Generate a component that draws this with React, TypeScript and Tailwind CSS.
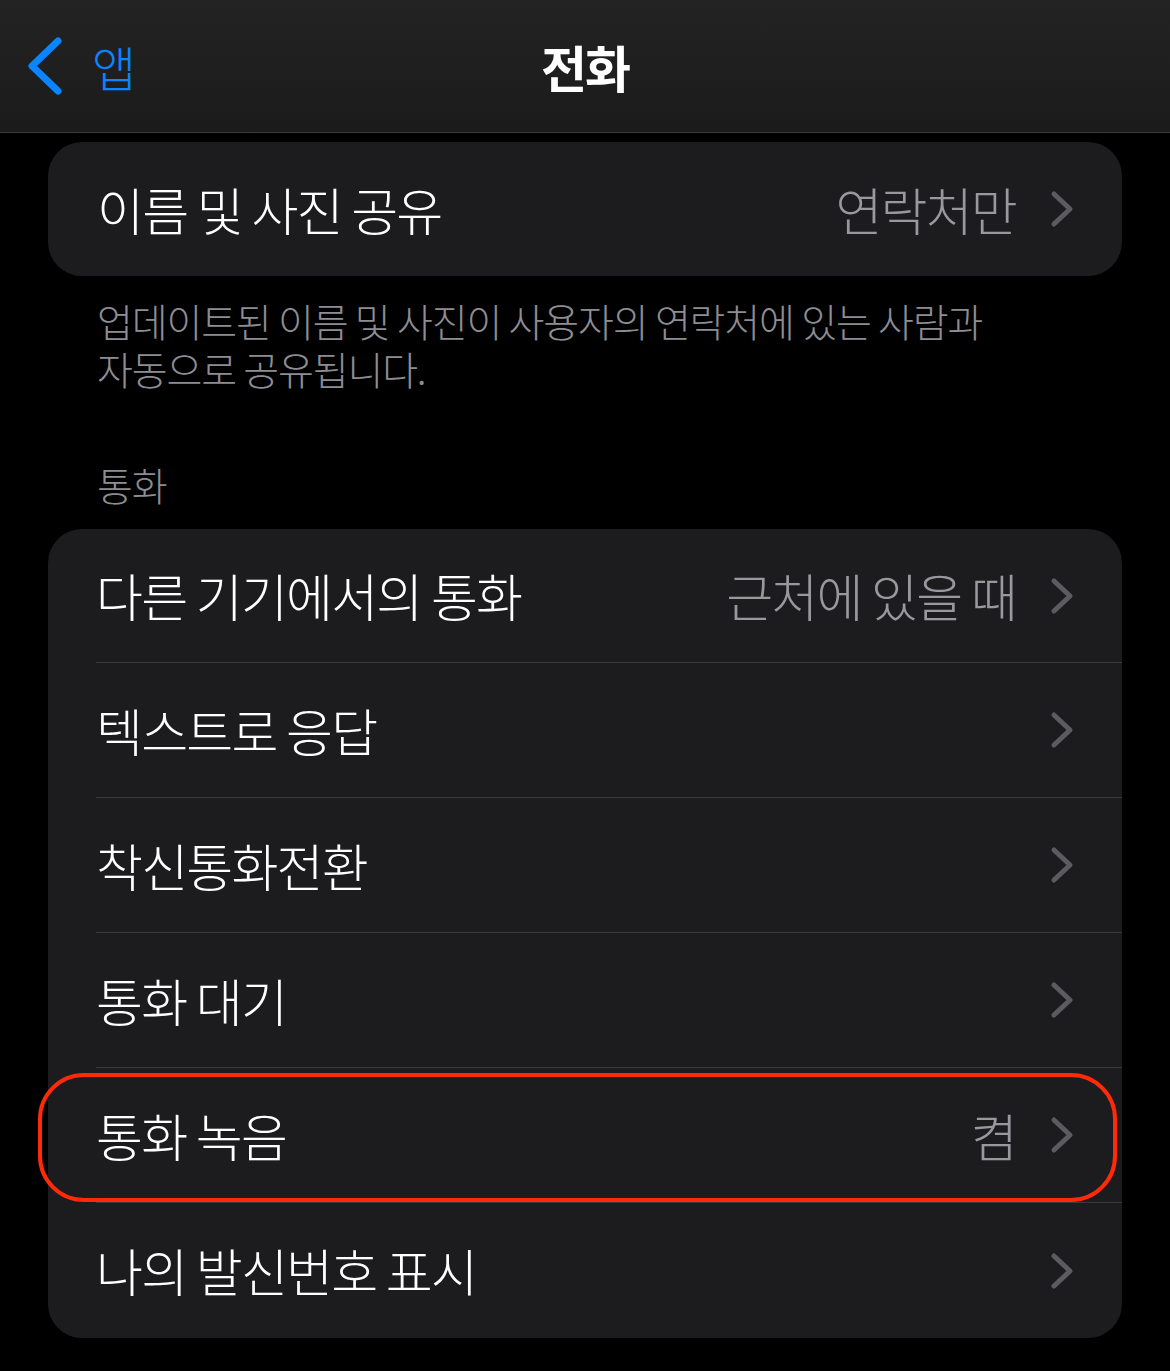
import React from "react";

const font = { fontFamily: '"Noto Sans CJK KR", "Noto Sans", sans-serif' };

function Chevron() {
  return (
    <svg width="24" height="38" viewBox="0 0 24 38" className="shrink-0">
      <polyline points="4,4 20,19 4,34" fill="none" stroke="#5b5b60" strokeWidth="5" strokeLinecap="round" strokeLinejoin="round" />
    </svg>
  );
}

function Row({ label, value, last, first }: { label: string; value?: string; last?: boolean; first?: boolean }) {
  return (
    <div className={`ml-[48px] flex items-center pr-[48px] ${first ? "h-[134px]" : "h-[135px]"} ${last ? "" : "border-b-[1.5px] border-[#3a3a3c]"}`}>
      <div className="flex-1 text-[51px] font-light leading-none tracking-[-0.035em] text-white">{label}</div>
      {value && <div className="mr-[34px] text-[51px] font-light leading-none tracking-[-0.035em] text-[#98989e]">{value}</div>}
      <Chevron />
    </div>
  );
}

export default function App() {
  return (
    <div className="min-h-[1371px] w-[1170px] bg-black" style={font}>
      <header className="grid h-[133px] grid-cols-[1fr_auto_1fr] items-center border-b-[1.5px] border-[#3a3a3a] bg-gradient-to-b from-[#232323] to-[#1b1b1b]">
        <div className="flex items-center gap-[28px] pl-[26px]">
          <svg width="38" height="60" viewBox="0 0 38 60">
            <polyline points="32,5 6,30 32,55" fill="none" stroke="#0a84ff" strokeWidth="7" strokeLinecap="round" strokeLinejoin="round" />
          </svg>
          <span className="text-[48px] font-light leading-none text-[#0a84ff]">앱</span>
        </div>
        <div className="text-[50px] font-bold leading-none tracking-[-0.04em] text-white">전화</div>
        <div />
      </header>

      <div className="mx-[48px] mt-[9px] rounded-[34px] bg-[#1c1c1e]">
        <div className="flex h-[134px] items-center pl-[49px] pr-[48px]">
          <div className="flex-1 text-[51px] font-light leading-none tracking-[-0.035em] text-white">이름 및 사진 공유</div>
          <div className="mr-[34px] text-[51px] font-light leading-none tracking-[-0.035em] text-[#98989e]">연락처만</div>
          <Chevron />
        </div>
      </div>

      <p className="mt-[20px] px-[97px] text-[39px] font-light leading-[48px] tracking-[-0.03em] text-[#8d8d93]">
        업데이트된 이름 및 사진이 사용자의 연락처에 있는 사람과
        <br />
        자동으로 공유됩니다.
      </p>

      <div className="mt-[68px] px-[97px] text-[39px] font-light leading-[48px] tracking-[-0.03em] text-[#8d8d93]">통화</div>

      <div className="relative mx-[48px] mt-[21px] rounded-[34px] bg-[#1c1c1e]">
        <Row first label="다른 기기에서의 통화" value="근처에 있을 때" />
        <Row label="텍스트로 응답" />
        <Row label="착신통화전환" />
        <Row label="통화 대기" />
        <Row label="통화 녹음" value="켬" />
        <Row last label="나의 발신번호 표시" />
        <div className="pointer-events-none absolute left-[-10px] top-[544px] h-[129px] w-[1079px] rounded-[46px] border-[4px] border-[#ff2a0a]" />
      </div>
    </div>
  );
}
